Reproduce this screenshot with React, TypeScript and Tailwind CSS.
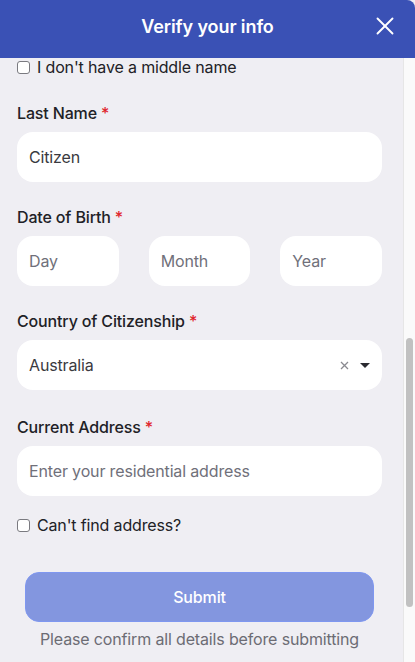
import { X } from 'lucide-react'

function Label({ text }: { text: string }) {
  return (
    <div className="mb-[7px] text-[16px] font-medium leading-6 text-[#212126]">
      {text} <span className="text-[#e0242b]">*</span>
    </div>
  )
}

function Field({
  value,
  placeholder,
  className = '',
}: {
  value?: string
  placeholder?: string
  className?: string
}) {
  return (
    <div
      className={`flex h-[50px] items-center rounded-2xl bg-white px-3 text-[16px] ${className}`}
    >
      {value ? (
        <span className="text-[#3a3a40]">{value}</span>
      ) : (
        <span className="text-[#70707a]">{placeholder}</span>
      )}
    </div>
  )
}

function Check({ text }: { text: string }) {
  return (
    <div className="flex h-6 items-center gap-[7px] text-[16px] text-[#212126]">
      <span className="h-[13px] w-[13px] rounded-[3px] border border-[#7a7a80] bg-white" />
      <span>{text}</span>
    </div>
  )
}

export default function App() {
  return (
    <div
      className="flex h-[662px] w-[415px] flex-col overflow-hidden bg-[#efeef3] tracking-[-0.15px]"
      style={{ fontFamily: 'Inter, "Noto Sans", sans-serif' }}
    >
      <header className="relative z-10 flex h-[58px] shrink-0 items-center justify-center rounded-tr-[8px] bg-[#3a51b5] pb-[5px]">
        <h1 className="text-[18px] font-semibold tracking-[-0.1px] text-white">
          Verify your info
        </h1>
        <button className="absolute right-[15px] top-[11px] text-white">
          <X size={30} strokeWidth={1.5} />
        </button>
      </header>

      <div className="flex min-h-0 flex-1">
        <div className="min-w-0 flex-1 overflow-hidden pl-[17px] pr-[21px]">
          <div className="-mt-[3px]">
            <Check text="I don't have a middle name" />

            <div className="mt-[22px]">
              <Label text="Last Name" />
              <Field value="Citizen" />
            </div>

            <div className="mt-[23px]">
              <Label text="Date of Birth" />
              <div className="grid grid-cols-3 gap-[30px]">
                <Field placeholder="Day" />
                <Field placeholder="Month" />
                <Field placeholder="Year" />
              </div>
            </div>

            <div className="mt-[23px]">
              <Label text="Country of Citizenship" />
              <div className="flex h-[50px] items-center rounded-2xl bg-white pl-3 pr-[12px] text-[16px]">
                <span className="flex-1 text-[#3a3a40]">Australia</span>
                <svg width="9" height="9" viewBox="0 0 9 9" className="mr-[11px]">
                  <path d="M1 1l7 7M8 1L1 8" stroke="#8a8a90" strokeWidth="1.3" />
                </svg>
                <svg width="10" height="5" viewBox="0 0 10 5">
                  <path d="M0 0h10L5 5z" fill="#2a2a30" />
                </svg>
              </div>
            </div>

            <div className="mt-[25px]">
              <Label text="Current Address" />
              <Field placeholder="Enter your residential address" />
            </div>

            <div className="mt-[17px]">
              <Check text="Can't find address?" />
            </div>

            <div className="mt-[35px] px-2">
              <button className="flex h-[50px] w-full items-center justify-center rounded-[14px] border border-[#7f97f0] bg-[#8396df] text-[16px] font-medium text-white">
                Submit
              </button>
              <p className="mt-[5px] text-center text-[16px] leading-6 text-[#6c6c74]">
                Please confirm all details before submitting
              </p>
            </div>
          </div>
        </div>

        <div className="w-[12px] shrink-0 border-l border-[#e6e6e6] bg-[#fafafa] pt-[280px]">
          <div className="mx-auto h-[269px] w-[7px] rounded-full bg-[#c1c1c1]" />
        </div>
      </div>
    </div>
  )
}
